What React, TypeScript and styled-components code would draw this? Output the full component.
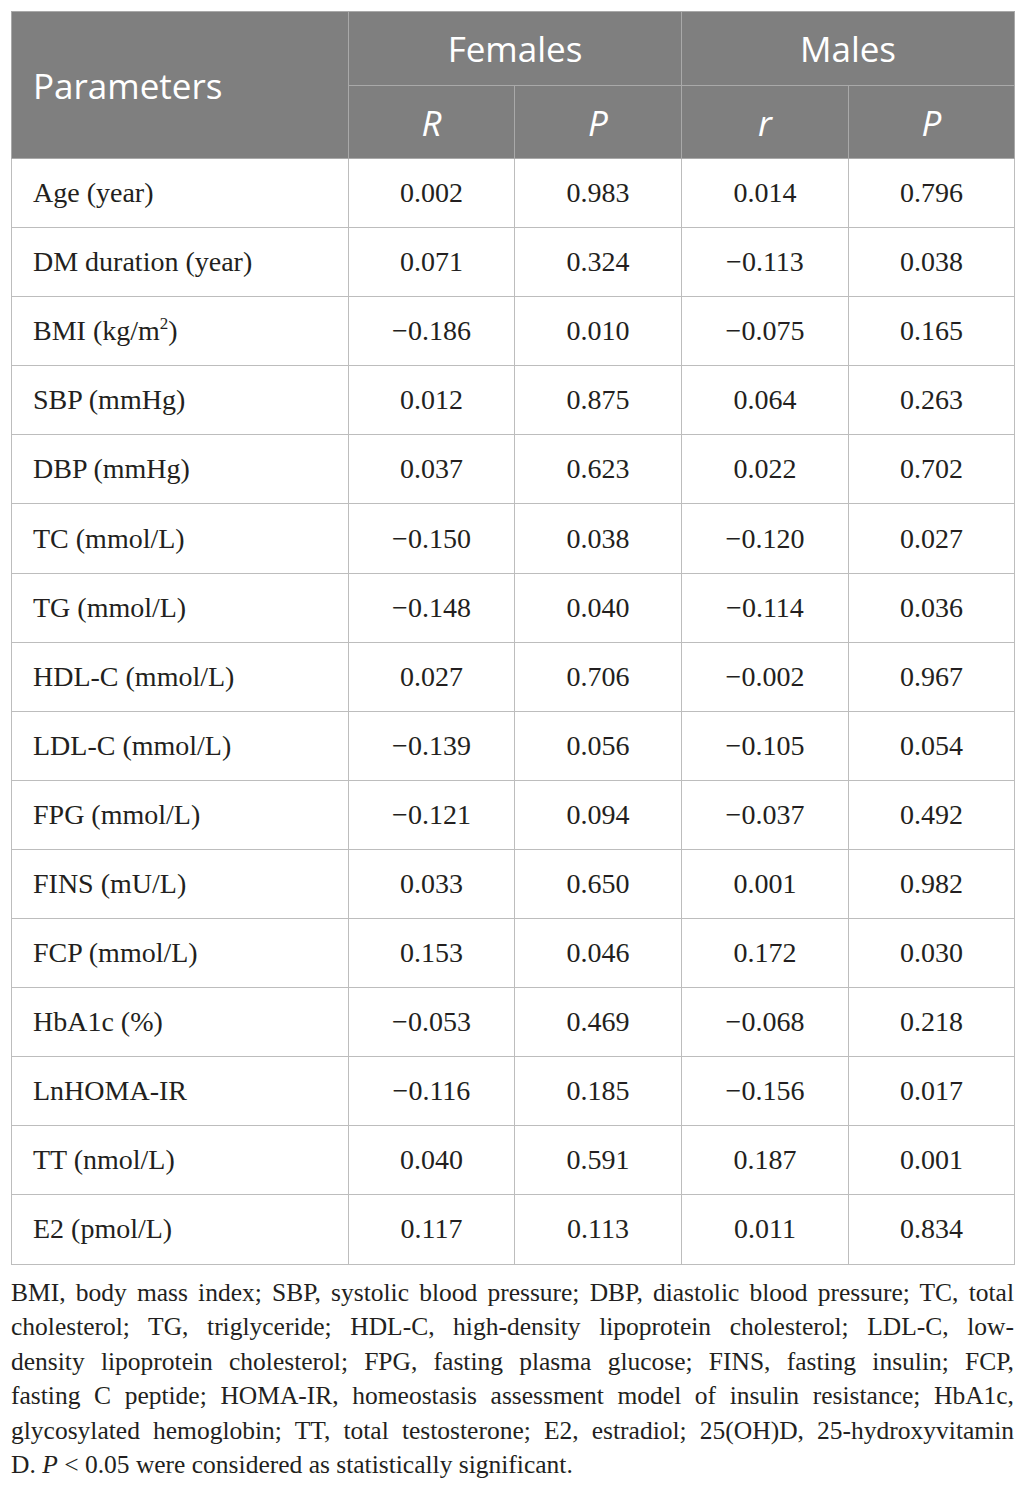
import React from "react";
import styled, { createGlobalStyle } from "styled-components";

const Global = createGlobalStyle`
  html, body { margin: 0; padding: 0; background: #ffffff; }
  body { font-family: "Liberation Serif", "Times New Roman", serif; color: #231f20; }
`;

const Page = styled.div`
  padding: 11px 12px 0 11px;
  width: 1003px;
`;

const Table = styled.table`
  width: 1003px;
  border-collapse: collapse;
  table-layout: fixed;
  border: 1px solid #bdbdbd;
`;

const HeadRow = styled.tr`
  background: #7f7f7f;
`;

const HeadCell = styled.th<{ $left?: boolean }>`
  height: 73px;
  padding: ${(p) => (p.$left ? "0 21px" : "0")};
  font-family: "Open Sans", "Noto Sans", sans-serif;
  font-weight: 400;
  font-size: 35px;
  color: #ffffff;
  text-align: ${(p) => (p.$left ? "left" : "center")};
  border: 1px solid #a9a9a9;
`;

const SubHeadCell = styled.th`
  height: 72px;
  padding: 0;
  font-family: "Open Sans", "Noto Sans", sans-serif;
  font-style: italic;
  font-weight: 400;
  font-size: 35px;
  color: #ffffff;
  text-align: center;
  border: 1px solid #a9a9a9;
`;

const Row = styled.tr``;

const Cell = styled.td<{ $param?: boolean }>`
  height: 68.1px;
  padding: ${(p) => (p.$param ? "0 21px" : "0")};
  font-size: 28px;
  color: #231f20;
  text-align: ${(p) => (p.$param ? "left" : "center")};
  border: 1px solid #bdbdbd;
  white-space: nowrap;
`;

const Sup = styled.sup`
  font-size: 17px;
  vertical-align: 11px;
  line-height: 0;
`;

const Footnote = styled.div`
  margin-top: 11px;
  width: 1003px;
  font-size: 25.5px;
  line-height: 34.5px;
  color: #231f20;
`;

const Line = styled.div<{ $last?: boolean }>`
  text-align: ${(p) => (p.$last ? "left" : "justify")};
  text-align-last: ${(p) => (p.$last ? "left" : "justify")};
  white-space: nowrap;
`;

const Ital = styled.i``;

type RowData = [React.ReactNode, string, string, string, string];

const rows: RowData[] = [
  ["Age (year)", "0.002", "0.983", "0.014", "0.796"],
  ["DM duration (year)", "0.071", "0.324", "\u22120.113", "0.038"],
  [
    <>
      BMI (kg/m<Sup>2</Sup>)
    </>,
    "\u22120.186",
    "0.010",
    "\u22120.075",
    "0.165",
  ],
  ["SBP (mmHg)", "0.012", "0.875", "0.064", "0.263"],
  ["DBP (mmHg)", "0.037", "0.623", "0.022", "0.702"],
  ["TC (mmol/L)", "\u22120.150", "0.038", "\u22120.120", "0.027"],
  ["TG (mmol/L)", "\u22120.148", "0.040", "\u22120.114", "0.036"],
  ["HDL-C (mmol/L)", "0.027", "0.706", "\u22120.002", "0.967"],
  ["LDL-C (mmol/L)", "\u22120.139", "0.056", "\u22120.105", "0.054"],
  ["FPG (mmol/L)", "\u22120.121", "0.094", "\u22120.037", "0.492"],
  ["FINS (mU/L)", "0.033", "0.650", "0.001", "0.982"],
  ["FCP (mmol/L)", "0.153", "0.046", "0.172", "0.030"],
  ["HbA1c (%)", "\u22120.053", "0.469", "\u22120.068", "0.218"],
  ["LnHOMA-IR", "\u22120.116", "0.185", "\u22120.156", "0.017"],
  ["TT (nmol/L)", "0.040", "0.591", "0.187", "0.001"],
  ["E2 (pmol/L)", "0.117", "0.113", "0.011", "0.834"],
];

const noteLines = [
  "BMI, body mass index; SBP, systolic blood pressure; DBP, diastolic blood pressure; TC, total",
  "cholesterol; TG, triglyceride; HDL-C, high-density lipoprotein cholesterol; LDL-C, low-",
  "density lipoprotein cholesterol; FPG, fasting plasma glucose; FINS, fasting insulin; FCP,",
  "fasting C peptide; HOMA-IR, homeostasis assessment model of insulin resistance; HbA1c,",
  "glycosylated hemoglobin; TT, total testosterone; E2, estradiol; 25(OH)D, 25-hydroxyvitamin",
];

export default function App() {
  return (
    <Page>
      <Global />
      <Table>
        <colgroup>
          <col style={{ width: 337 }} />
          <col style={{ width: 166 }} />
          <col style={{ width: 167 }} />
          <col style={{ width: 167 }} />
          <col style={{ width: 166 }} />
        </colgroup>
        <thead>
          <HeadRow>
            <HeadCell $left rowSpan={2}>
              Parameters
            </HeadCell>
            <HeadCell colSpan={2}>Females</HeadCell>
            <HeadCell colSpan={2}>Males</HeadCell>
          </HeadRow>
          <HeadRow>
            <SubHeadCell>R</SubHeadCell>
            <SubHeadCell>P</SubHeadCell>
            <SubHeadCell>r</SubHeadCell>
            <SubHeadCell>P</SubHeadCell>
          </HeadRow>
        </thead>
        <tbody>
          {rows.map((r, i) => (
            <Row key={i}>
              <Cell $param>{r[0]}</Cell>
              <Cell>{r[1]}</Cell>
              <Cell>{r[2]}</Cell>
              <Cell>{r[3]}</Cell>
              <Cell>{r[4]}</Cell>
            </Row>
          ))}
        </tbody>
      </Table>
      <Footnote>
        {noteLines.map((l, i) => (
          <Line key={i}>{l}</Line>
        ))}
        <Line $last>
          D. <Ital>P</Ital> &lt; 0.05 were considered as statistically significant.
        </Line>
      </Footnote>
    </Page>
  );
}
